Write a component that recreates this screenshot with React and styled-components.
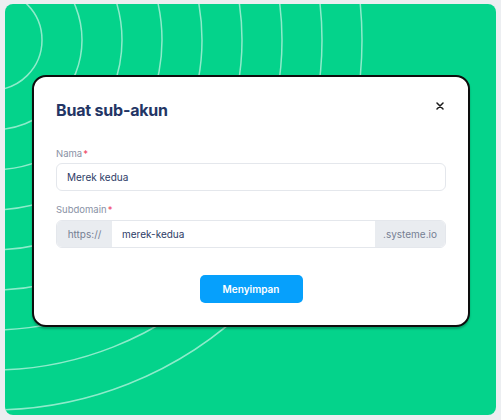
import React from "react";
import styled, { createGlobalStyle } from "styled-components";

const GlobalStyle = createGlobalStyle`
	* {
		box-sizing: border-box;
	}
	body {
		margin: 0;
		background: #eceef1;
		font-family: Inter, "Noto Sans", sans-serif;
	}
`;

const Page = styled.div`
	padding: 4px 5px 5px 5px;
	height: 420px;
`;

const GreenCard = styled.div`
	position: relative;
	overflow: hidden;
	height: 411px;
	background: #04d38b;
	border-radius: 8px;
	padding: 71px 26px 0 27px;
`;

const Waves = styled.svg`
	position: absolute;
	top: 0;
	left: 0;
	width: 100%;
	height: 100%;
`;

const Modal = styled.div`
	position: relative;
	height: 252px;
	background: #fff;
	border: 2px solid #0d0d0d;
	border-radius: 14px;
	box-shadow: 0 2px 2px rgba(0, 0, 0, 0.25);
	padding: 22px 22px 22px 22px;
	display: flex;
	flex-direction: column;
`;

const Header = styled.div`
	display: flex;
	align-items: center;
	justify-content: space-between;
	height: 22px;
`;

const Title = styled.h2`
	margin: 0;
	font-size: 16px;
	font-weight: 700;
	color: #233565;
	letter-spacing: -0.2px;
`;

const CloseButton = styled.button`
	border: none;
	background: none;
	padding: 0;
	margin: -8px 1px 0 0;
	width: 10px;
	height: 10px;
	display: flex;
	align-items: center;
	justify-content: center;
	cursor: pointer;
`;

const Field = styled.div`
	display: flex;
	flex-direction: column;
	gap: ${(p) => p.$gap}px;
	margin-top: ${(p) => p.$top}px;
`;

const Label = styled.label`
	font-size: 9.5px;
	line-height: 12px;
	color: #8991a5;

	> span {
		color: #ef4565;
		margin-left: 1px;
	}
`;

const TextInput = styled.div`
	height: 28px;
	border: 1px solid #e4e7ec;
	border-radius: 6px;
	display: flex;
	align-items: center;
	padding: 0 10px;
	font-size: 10px;
	color: #2c3b66;
`;

const Group = styled.div`
	height: 28px;
	display: flex;
	border: 1px solid #e4e7ec;
	border-radius: 6px;
	overflow: hidden;
`;

const Addon = styled.div`
	width: ${(p) => p.$width}px;
	flex: none;
	background: #e9ecf0;
	color: #767f93;
	font-size: 10px;
	display: flex;
	align-items: center;
	justify-content: center;
`;

const GroupValue = styled.div`
	flex: 1;
	display: flex;
	align-items: center;
	padding: 0 10px;
	font-size: 10px;
	color: #2c3b66;
`;

const Footer = styled.div`
	display: flex;
	justify-content: center;
	margin-top: 27px;
`;

const SaveButton = styled.button`
	width: 103px;
	height: 28px;
	border: none;
	border-radius: 5px;
	background: #06a0fc;
	color: #fff;
	font-family: Inter, sans-serif;
	font-size: 10px;
	font-weight: 600;
`;

const radii = Array.from({ length: 9 }, (_, i) => 50 + i * 40);

export default function App() {
	return (
		<Page>
			<GlobalStyle />
			<GreenCard>
				<Waves viewBox="0 0 491 411">
					{radii.map((r) => (
						<circle
							key={r}
							cx="-13"
							cy="36"
							r={r}
							fill="none"
							stroke="rgba(255,255,255,0.55)"
							strokeWidth="1.5"
						/>
					))}
				</Waves>
				<Modal>
					<Header>
						<Title>Buat sub-akun</Title>
						<CloseButton aria-label="close">
							<svg width="8" height="8" viewBox="0 0 8 8">
								<path d="M1 1L7 7M7 1L1 7" stroke="#1b1b1b" strokeWidth="1.5" strokeLinecap="round" />
							</svg>
						</CloseButton>
					</Header>

					<Field $top={27} $gap={3}>
						<Label>
							Nama<span>*</span>
						</Label>
						<TextInput>Merek kedua</TextInput>
					</Field>

					<Field $top={13} $gap={4}>
						<Label>
							Subdomain<span>*</span>
						</Label>
						<Group>
							<Addon $width={55}>https://</Addon>
							<GroupValue>merek-kedua</GroupValue>
							<Addon $width={70}>.systeme.io</Addon>
						</Group>
					</Field>

					<Footer>
						<SaveButton>Menyimpan</SaveButton>
					</Footer>
				</Modal>
			</GreenCard>
		</Page>
	);
}
